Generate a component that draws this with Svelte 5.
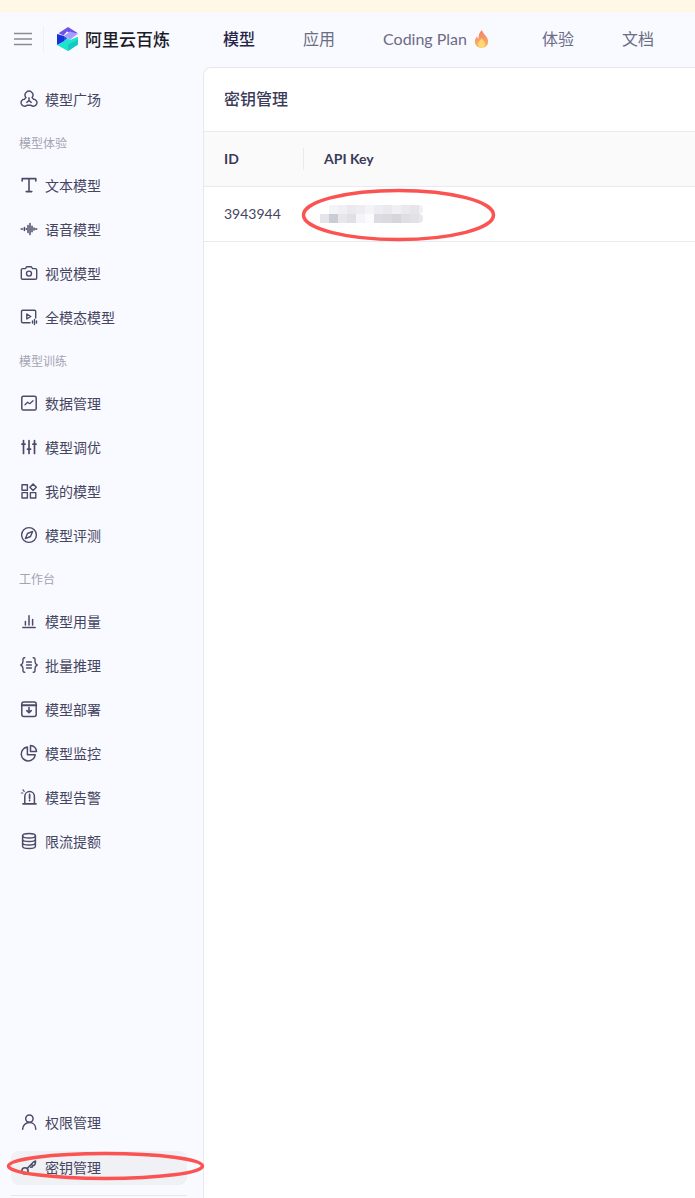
<script>
	const navItems = ['应用', 'Coding Plan', '体验', '文档'];

	const groups = [
		{
			items: [{ icon: 'square', label: '模型广场' }]
		},
		{
			title: '模型体验',
			items: [
				{ icon: 'text', label: '文本模型' },
				{ icon: 'voice', label: '语音模型' },
				{ icon: 'camera', label: '视觉模型' },
				{ icon: 'video', label: '全模态模型' }
			]
		},
		{
			title: '模型训练',
			items: [
				{ icon: 'chart', label: '数据管理' },
				{ icon: 'tune', label: '模型调优' },
				{ icon: 'apps', label: '我的模型' },
				{ icon: 'compass', label: '模型评测' }
			]
		},
		{
			title: '工作台',
			items: [
				{ icon: 'bars', label: '模型用量' },
				{ icon: 'braces', label: '批量推理' },
				{ icon: 'deploy', label: '模型部署' },
				{ icon: 'pie', label: '模型监控' },
				{ icon: 'alarm', label: '模型告警' },
				{ icon: 'db', label: '限流提额' }
			]
		}
	];

	const bottomItems = [
		{ icon: 'user', label: '权限管理' },
		{ icon: 'key', label: '密钥管理', active: true }
	];

	// pixelated key, one colour per cell
	const mosaicTop = ['#ffffff', '#f4f4f7', '#f0f0f4', '#e9e9ee', '#eeeef2', '#f4f4f8', '#eeeef2', '#e9e9ee', '#f0f0f3', '#eaeaee', '#e6e6ea', '#f0f0f3'];
	const mosaicBottom = ['#e4e4e9', '#c9cbd7', '#e6e6eb', '#e0e0e6', '#f5f5f8', '#fbfbfd', '#dcdce2', '#dadae0', '#d5d5dc', '#dedee3', '#e2e2e6', '#e8e8ec'];
</script>

{#snippet icon(name)}
	<svg class="icon" viewBox="0 0 18 18" fill="none" stroke="currentColor" stroke-width="1.4" stroke-linecap="round" stroke-linejoin="round">
		{#if name === 'square'}
			<path d="M6 7.600A3.900 3.900 0 1 1 12 7.600L13.600 9.200A3.500 3.500 0 1 1 11 15.200H7A3.500 3.500 0 1 1 4.400 9.200z" />
			<path d="M9 7.800v2.700M6.800 12.400L9 10.500l2.200 1.900" />
		{:else if name === 'text'}
			<path d="M2.200 5V2.600h13.600V5M9 2.600v13M6.200 15.600h5.600" stroke-width="1.600" />
		{:else if name === 'voice'}
			<path d="M1.200 9h1.300M4.400 7.600v2.800M6.300 8.800v.4M8 5.600v6.800M10 3.600v10.800M12 6.200v5.600M14 8v2M15.600 9h1.200" stroke-width="1.500" />
		{:else if name === 'camera'}
			<path d="M2.600 4.600h2.800L6.600 2.800h4.800l1.200 1.800h2.800a1.300 1.300 0 0 1 1.300 1.300v8a1.300 1.300 0 0 1-1.300 1.300H2.600a1.300 1.300 0 0 1-1.300-1.300v-8a1.300 1.300 0 0 1 1.300-1.300z" />
			<circle cx="9" cy="9.600" r="2.500" />
		{:else if name === 'video'}
			<path d="M10 14.800H2.800a1.300 1.300 0 0 1-1.300-1.300V3.500a1.300 1.300 0 0 1 1.300-1.300h11.600a1.300 1.300 0 0 1 1.300 1.300V10" />
			<path d="M6.800 6l4 2.500-4 2.500z" />
			<path d="M12.500 13v2M14.500 11.500v5M16.500 13v2" />
		{:else if name === 'chart'}
			<rect x="1.800" y="2.200" width="14.400" height="13.800" rx="1.600" stroke-width="1.500" />
			<path d="M5 10.800l2.600-2.600 2.200 1.500L13 6.800" stroke-width="1.300" />
		{:else if name === 'tune'}
			<path d="M3.500 2.500v13M9 2.500v13M14.500 2.500v13" stroke-width="1.700" />
			<path d="M2 6.200h3M7.500 11.200h3M13 6.200h3" stroke-width="1.800" />
		{:else if name === 'apps'}
			<rect x="2" y="2.800" width="5.400" height="5.400" />
			<rect x="2" y="10.600" width="5.400" height="5.400" />
			<rect x="10.400" y="10.600" width="5.400" height="5.400" />
			<path d="M13.100 2l3.200 3.300-3.200 3.300-3.200-3.300z" />
		{:else if name === 'compass'}
			<circle cx="9" cy="9" r="7.400" />
			<path d="M12.600 5.400L10.500 10.500 5.400 12.600 7.500 7.500z" />
		{:else if name === 'bars'}
			<path d="M2.800 15.600h12.400M5.400 13V9.400M9 13V3.800M12.600 13V7.400" stroke-width="1.500" />
		{:else if name === 'braces'}
			<path d="M4.800 1.800c-2.200 0-1.800 1.600-1.800 3.400S3 8 .8 9c2.200 1 2.200 2 2.200 3.800s-.4 3.400 1.800 3.400M13.200 1.800c2.200 0 1.800 1.600 1.800 3.400s0 2.800 2.200 3.800c-2.200 1-2.200 2-2.200 3.800s.4 3.400-1.800 3.400" />
			<path d="M6.600 6h4.800M6.600 9h4.800M6.600 12h4.800" />
		{:else if name === 'deploy'}
			<rect x="1.800" y="2" width="14.400" height="14.400" rx="2" stroke-width="1.500" />
			<path d="M1.800 5.200h14.400" stroke-width="2" />
			<path d="M9 7.600v5M6.800 10.600L9 12.800l2.200-2.200" stroke-width="1.600" />
		{:else if name === 'pie'}
			<path d="M7.400 3a7 7 0 1 0 7.800 7.800H7.400z" stroke-width="1.500" />
			<path d="M10.500 1.500a6.200 6.200 0 0 1 6 6h-6z" stroke-width="1.500" />
		{:else if name === 'alarm'}
			<path d="M4.800 15V8.400a4.800 4.800 0 0 1 9.600 0V15" stroke-width="1.500" />
			<path d="M3 15.800h13" stroke-width="1.700" />
			<path d="M9.600 6.400v3.800M9.600 12.200v.4" stroke-width="1.700" />
			<path d="M3 1.800l1.200 1.500M1.400 5h1.400" stroke-width="1.200" />
		{:else if name === 'db'}
			<ellipse cx="9" cy="3.800" rx="6.400" ry="2.300" stroke-width="1.500" />
			<path d="M2.600 3.800v10.400c0 1.300 2.900 2.300 6.400 2.300s6.400-1 6.400-2.300V3.800M2.600 7.300c0 1.300 2.900 2.300 6.400 2.300s6.400-1 6.400-2.300M2.600 10.800c0 1.300 2.900 2.300 6.400 2.300s6.400-1 6.400-2.300" stroke-width="1.500" />
		{:else if name === 'user'}
			<circle cx="9.400" cy="5.600" r="3.700" stroke-width="1.500" />
			<path d="M2.600 16.200c0-3.800 3-6.600 6.800-6.600s6.400 2.800 6.400 6.600" stroke-width="1.500" />
		{:else if name === 'key'}
			<circle cx="5" cy="12.800" r="3.100" stroke-width="1.600" />
			<path d="M7.200 10.600L13.200 4.200l2.400-1.200-.4 3-1.200 1.400-1.800-.2.200 1.800-1.800.2" stroke-width="1.500" />
		{/if}
	</svg>
{/snippet}

<div class="page">
	<div class="banner"></div>

	<header class="topbar">
		<div class="brand">
			<svg class="menu" viewBox="0 0 18 14" fill="none" stroke="#8b8b92" stroke-width="1.600">
				<path d="M0 1.500h18M0 7h18M0 12.500h18" />
			</svg>
			<span class="brand-sep"></span>
			<svg class="logo" viewBox="0 0 21 24">
				<path d="M1.500 6.200L11 0l10 6.200-6.500.6L10 4.500 6.500 8.500z" fill="#6f52ee" />
				<path d="M7 8.800l6-4.300 8 2.300-7.800 5.600z" fill="#a99bff" />
				<path d="M0 7l7 2v6L0 18z" fill="#1730d8" />
				<path d="M7 9l3.500 2.200-3.500 3z" fill="#2f49ee" />
				<path d="M7 14l4-2.800 2.500 1.600L21 9.800v7.700L11 24 0 18z" fill="#1fe3cf" />
				<path d="M11 24V17.800l10-5.200v4.900z" fill="#14c9c0" />
			</svg>
			<span class="brand-name">阿里云百炼</span>
		</div>
		<nav class="nav">
			<span class="nav-item current">模型</span>
			{#each navItems as item}
				<span class="nav-item">
					{item}
					{#if item === 'Coding Plan'}
						<svg class="flame" viewBox="0 0 14 18">
							<defs>
								<linearGradient id="flameFill" x1="0" y1="0" x2="0" y2="1">
									<stop offset="0" stop-color="#f0806a" />
									<stop offset="1" stop-color="#fdbb62" />
								</linearGradient>
							</defs>
							<path d="M7.500 0C8 3 10 4 11.800 6.600c1.400 2 2 4 1.800 6C13.200 15.800 10.400 18 7 18S.8 15.800.4 12.600C.1 10 1.200 8 2.600 6.600c.2 1 .6 1.800 1.400 2.200C3.800 5.400 5 2 7.500 0z" fill="url(#flameFill)" />
							<path d="M7 8.500c1.600 1.600 3.600 3 3.600 5.300 0 2.200-1.600 4.200-3.600 4.200s-3.600-2-3.600-4.200c0-2.300 2.400-3 3.600-5.300z" fill="#fed873" />
						</svg>
					{/if}
				</span>
			{/each}
		</nav>
	</header>

	<div class="body">
		<aside class="sidebar">
			{#each groups as group}
				{#if group.title}
					<div class="group-title">{group.title}</div>
				{/if}
				{#each group.items as item}
					<div class="side-item">
						{@render icon(item.icon)}
						<span>{item.label}</span>
					</div>
				{/each}
			{/each}

			<div class="spacer"></div>

			{#each bottomItems as item}
				<div class="side-item" class:active={item.active}>
					{@render icon(item.icon)}
					<span>{item.label}</span>
				</div>
			{/each}
			<div class="side-rule"></div>
		</aside>

		<main class="card">
			<h1 class="card-title">密钥管理</h1>
			<div class="row head">
				<div class="col-id">ID</div>
				<div class="col-key">API Key</div>
			</div>
			<div class="row">
				<div class="col-id">3943944</div>
				<div class="col-key">
					<div class="mosaic">
						<div class="mosaic-row">
							{#each mosaicTop as c}
								<i style="background: {c}"></i>
							{/each}
						</div>
						<div class="mosaic-row">
							{#each mosaicBottom as c}
								<i style="background: {c}"></i>
							{/each}
						</div>
					</div>
				</div>
			</div>
		</main>
	</div>

	<!-- red annotation marks drawn over the screenshot -->
	<svg class="marks" viewBox="0 0 695 1198" fill="none" stroke="#fb5252" stroke-width="3.500">
		<ellipse cx="398.500" cy="215" rx="95" ry="24.500" />
		<ellipse cx="105.500" cy="1166" rx="97" ry="12.500" />
	</svg>
</div>

<style>
	:global(body) {
		margin: 0;
		background: #fff;
	}

	.page {
		position: relative;
		display: flex;
		flex-direction: column;
		width: 695px;
		height: 1198px;
		overflow: hidden;
		background: #f9faff;
		color: #3b3b5b;
		font-family: Lato, 'Noto Sans CJK SC', sans-serif;
	}

	.banner {
		height: 12px;
		flex: none;
		background: #fff8e7;
	}

	.topbar {
		display: flex;
		align-items: center;
		flex: none;
		box-sizing: border-box;
		height: 55px;
		padding-bottom: 2px;
		white-space: nowrap;
	}

	.brand {
		display: flex;
		align-items: center;
		width: 223px;
		flex: none;
		padding-left: 14px;
		box-sizing: border-box;
	}

	.menu {
		width: 18px;
		height: 14px;
	}

	.brand-sep {
		width: 1px;
		height: 26px;
		margin: 0 13px 0 11px;
		background: #eff0f5;
	}

	.logo {
		width: 21px;
		height: 24px;
		margin-right: 7px;
	}

	.brand-name {
		font-size: 17px;
		font-weight: 500;
		color: #1c1c28;
	}

	.nav {
		display: flex;
		gap: 48px;
	}

	.nav-item {
		display: flex;
		align-items: center;
		gap: 7px;
		font-size: 16px;
		line-height: 24px;
		color: #6c6c85;
	}

	.nav-item.current {
		font-weight: 500;
		color: #26264a;
	}

	.flame {
		width: 15px;
		height: 18px;
		margin-right: 5px;
	}

	.body {
		display: flex;
		flex: 1;
		min-height: 0;
	}

	.sidebar {
		display: flex;
		flex-direction: column;
		width: 203px;
		flex: none;
		box-sizing: border-box;
		padding: 10px 16px 0 11px;
	}

	.group-title {
		height: 42px;
		padding-left: 8px;
		font-size: 12px;
		line-height: 46px;
		color: #a3a3b3;
	}

	.side-item {
		display: flex;
		align-items: center;
		height: 44px;
		flex: none;
		padding-left: 9px;
		font-size: 14px;
		color: #45455f;
	}

	.side-item.active {
		box-sizing: border-box;
		height: 34px;
		margin-top: 7px;
		padding-bottom: 2px;
		border-radius: 8px;
		background: #f0f1f5;
	}

	.icon {
		width: 18px;
		height: 18px;
		margin-right: 7px;
		flex: none;
		color: #4b4b68;
	}

	.spacer {
		flex: 1;
	}

	.side-rule {
		height: 1px;
		margin-top: 10px;
		margin-bottom: 2px;
		background: #e6e7ee;
	}

	.card {
		flex: 1;
		min-width: 0;
		box-sizing: border-box;
		border: 1px solid #e6e8ef;
		border-width: 1px 0 0 1px;
		border-top-left-radius: 8px;
		background: #fff;
	}

	.card-title {
		height: 63px;
		margin: 0;
		padding-left: 20px;
		font-size: 16px;
		font-weight: 500;
		line-height: 61px;
		color: #3b3b5b;
		border-bottom: 1px solid #e9eaf0;
	}

	.row {
		display: flex;
		align-items: center;
		box-sizing: border-box;
		height: 55px;
		padding-bottom: 2px;
		font-size: 14px;
		border-bottom: 1px solid #e9eaf0;
		color: #45455f;
	}

	.row.head {
		padding-bottom: 0;
		background: #fafafa;
		font-weight: 700;
		color: #3b3b5b;
	}

	.col-id {
		width: 120px;
		flex: none;
		box-sizing: border-box;
		padding-left: 20px;
	}

	.head .col-id {
		width: 100px;
		height: 22px;
		margin-right: 20px;
		line-height: 22px;
		border-right: 1px solid #e9eaf0;
	}

	.head .col-key {
		margin-top: -2px;
	}

	.mosaic {
		margin-left: -4px;
		margin-top: 1px;
	}

	.mosaic-row {
		display: flex;
		height: 9px;
	}

	.mosaic-row i {
		width: 9px;
		flex: none;
	}

	.mosaic-row i:last-child {
		width: 4px;
		border-radius: 0 4px 4px 0;
	}

	.marks {
		position: absolute;
		top: 0;
		left: 0;
		width: 695px;
		height: 1198px;
		pointer-events: none;
	}
</style>
